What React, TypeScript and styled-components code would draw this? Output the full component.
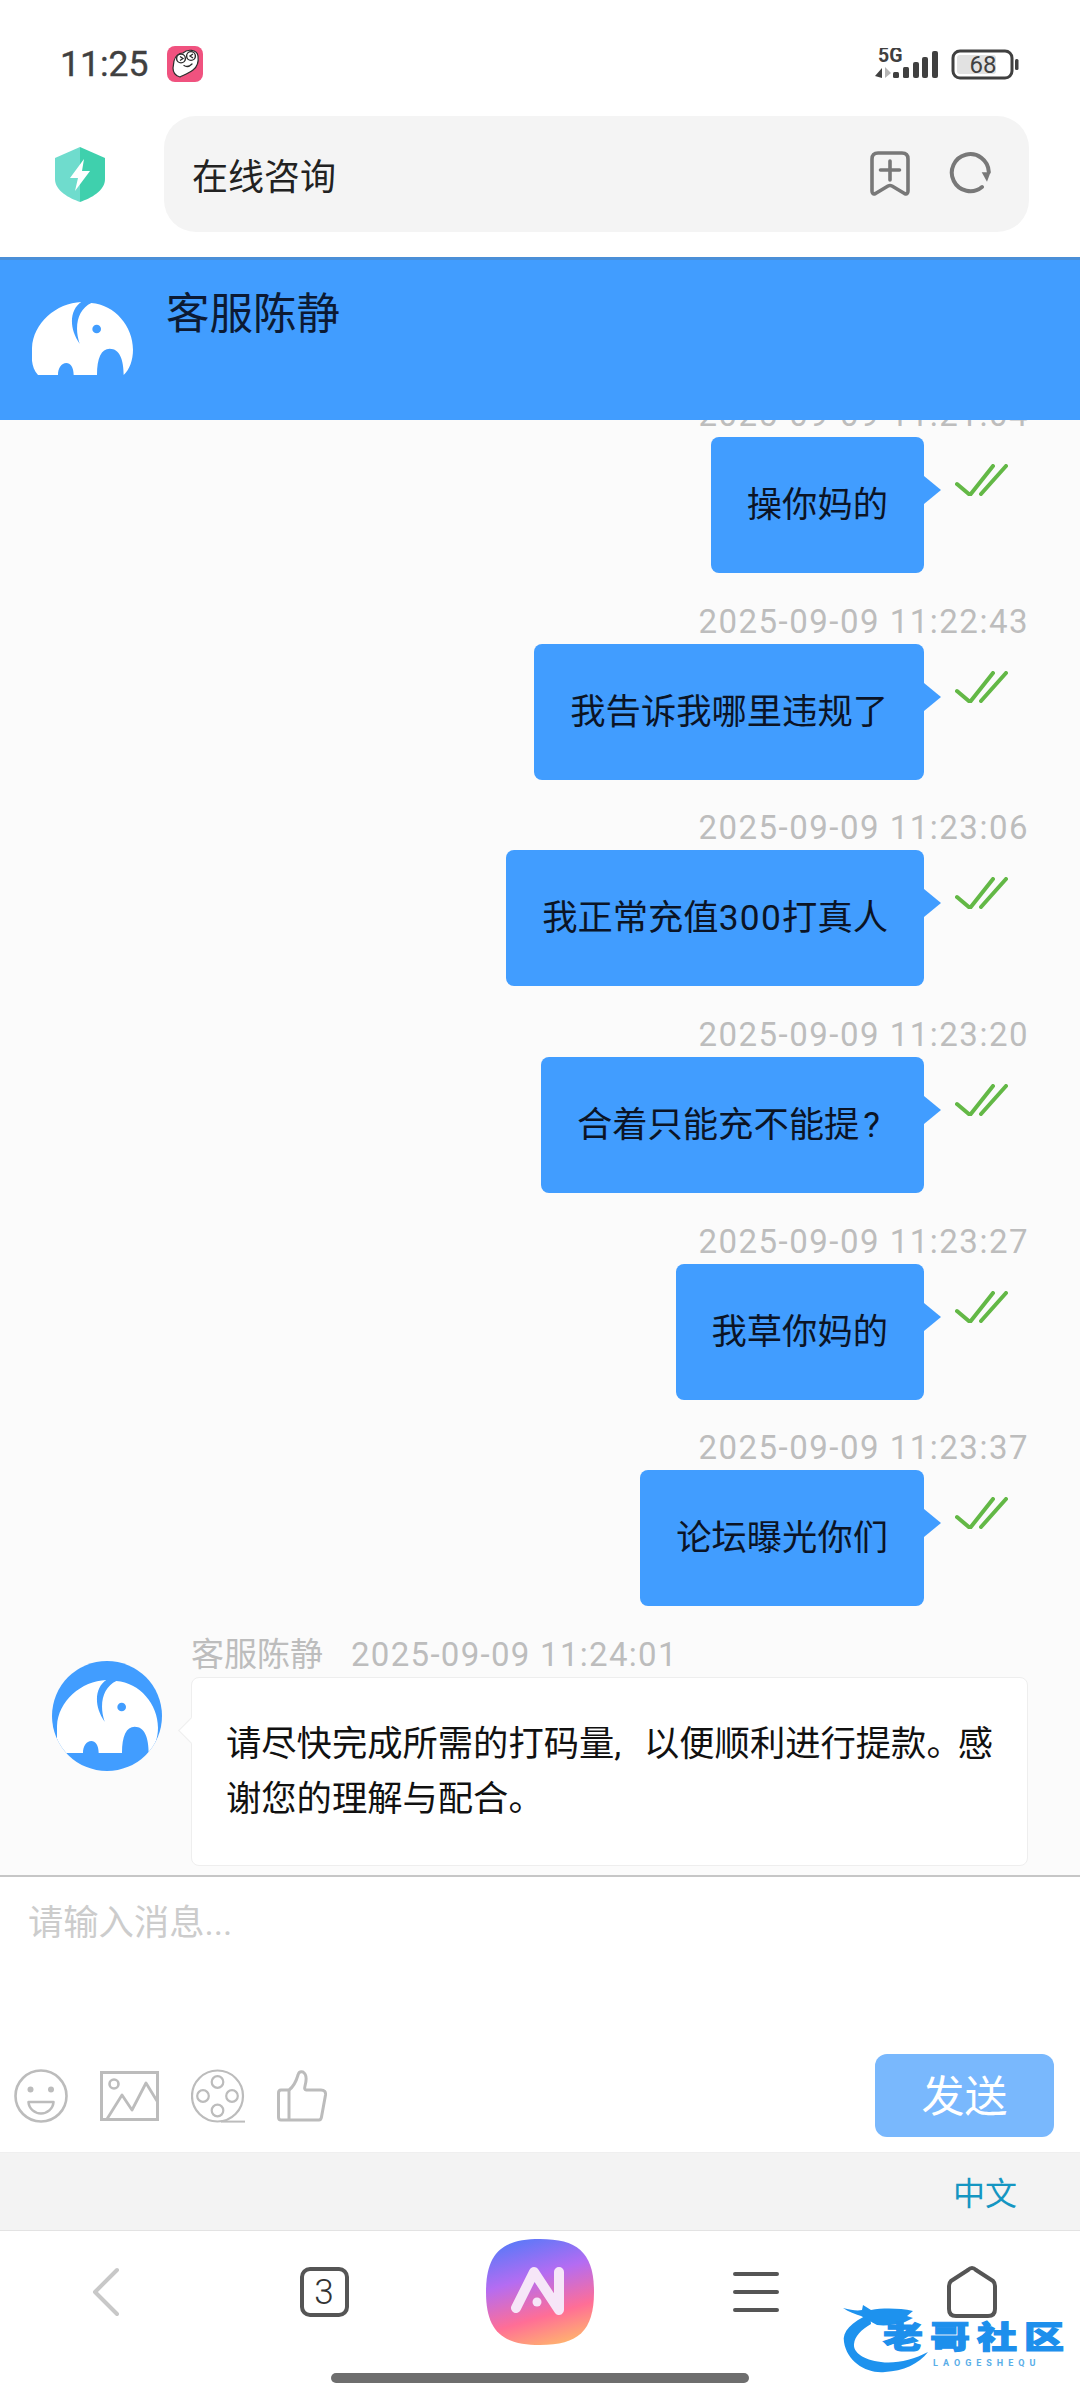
import React from 'react';
import styled, { createGlobalStyle } from 'styled-components';

const GlobalStyle = createGlobalStyle`
  html, body {
    margin: 0;
    padding: 0;
    background: #fff;
  }
  body {
    font-family: Roboto, "Noto Sans CJK SC", sans-serif;
  }
  * {
    box-sizing: border-box;
  }
`;

const Page = styled.div`
  width: 1080px;
  height: 2400px;
  position: relative;
  overflow: hidden;
  display: flex;
  flex-direction: column;
  background: #fff;
`;

/* status bar */
const StatusBar = styled.div`
  height: 110px;
  padding: 46px 61px 0 60px;
  display: flex;
  align-items: flex-start;
  flex: none;
`;

const Clock = styled.div`
  font-size: 35.5px;
  line-height: 36px;
  font-weight: 400;
  -webkit-text-stroke: 0.4px #404040;
  color: #404040;
  width: 107px;
`;

const StatusRight = styled.div`
  margin-left: auto;
  display: flex;
  align-items: flex-start;
  margin-top: 2px;
`;

/* address bar */
const TopBar = styled.div`
  height: 147px;
  padding: 6px 51px 25px 55px;
  display: flex;
  align-items: stretch;
  flex: none;
`;

const Shield = styled.svg`
  width: 50px;
  height: 55px;
  align-self: center;
  margin-top: 1px;
  flex: none;
`;

const UrlBar = styled.div`
  margin-left: 59px;
  flex: 1;
  background: #f4f4f4;
  border-radius: 32px;
  display: flex;
  align-items: center;
  padding: 0 38px 0 28px;
`;

const UrlText = styled.div`
  font-size: 36px;
  color: #222;
  flex: 1;
`;

const UrlIcon = styled.svg<{ $gap?: number }>`
  flex: none;
  margin-left: ${(p) => p.$gap || 0}px;
`;

/* chat header */
const ChatHeader = styled.div`
  height: 163px;
  flex: none;
  background: #419dff;
  border-top: 3px solid #4a8fd8;
  display: flex;
  padding: 42px 0 0 32px;
  position: relative;
  z-index: 1;
`;

const HeaderElephant = styled.svg`
  width: 101px;
  height: 73px;
  flex: none;
`;

const HeaderName = styled.div`
  margin: -17px 0 0 33px;
  font-size: 43.5px;
  line-height: 60px;
  color: #0c1a33;
`;

/* messages */
const Chat = styled.div`
  height: 1455px;
  flex: none;
  background: #fbfbfb;
  overflow: hidden;
`;

const ChatScroll = styled.div`
  margin-top: -29px;
  display: flex;
  flex-direction: column;
`;

const Sent = styled.div`
  display: flex;
  flex-direction: column;
  align-items: flex-end;
  padding-right: 52px;
  margin-bottom: 24.7px;
`;

const Stamp = styled.div`
  font-size: 33px;
  line-height: 48px;
  margin: 0 -1px -2px 0;
  letter-spacing: 1.5px;
  color: #bdbdbd;
  white-space: nowrap;
`;

const SentRow = styled.div`
  display: flex;
  align-items: flex-start;
`;

const Bubble = styled.div`
  position: relative;
  height: 136px;
  padding: 0 36px;
  background: #419dff;
  border-radius: 8px;
  font-size: 35.3px;
  line-height: 136px;
  color: #0b1426;
  white-space: nowrap;

  &::after {
    content: "";
    position: absolute;
    left: 100%;
    top: 39px;
    border-style: solid;
    border-width: 14px 0 14px 17px;
    border-color: transparent transparent transparent #419dff;
  }
`;

const Digits = styled.span`
  letter-spacing: 1.3px;
`;

const QuestionMark = styled.span`
  padding: 0 8px 0 4px;
`;

const Ticks = styled.svg`
  width: 53px;
  height: 32px;
  margin: 27px 20px 0 31px;
  flex: none;
`;

const Received = styled.div`
  display: flex;
  padding: 0 52px;
`;

const AvatarCircle = styled.div`
  width: 110px;
  height: 110px;
  margin-top: 30px;
  border-radius: 50%;
  background: #419dff;
  overflow: hidden;
  flex: none;
  padding: 19px 0 0 5px;
`;

const AvatarElephant = styled.svg`
  display: block;
  width: 101px;
  height: 73px;
`;

const ReceivedBody = styled.div`
  margin-left: 29px;
  flex: 1;
  display: flex;
  flex-direction: column;
`;

const NameLine = styled.div`
  display: flex;
  gap: 28px;
  font-size: 33px;
  line-height: 48px;
  margin-bottom: -2px;
  color: #bdbdbd;
`;

const StampInline = styled.span`
  letter-spacing: 1.3px;
`;

const Card = styled.div`
  position: relative;
  height: 189px;
  padding: 39px 20px 0 34px;
  background: #fff;
  border: 1.5px solid #eeeeee;
  border-radius: 8px;
  font-size: 35.3px;
  line-height: 55px;
  color: #111;

  &::before {
    content: "";
    position: absolute;
    left: -10px;
    top: 43px;
    width: 18px;
    height: 18px;
    background: #fff;
    border-left: 1.5px solid #eeeeee;
    border-bottom: 1.5px solid #eeeeee;
    transform: rotate(45deg);
  }
`;

const Comma = styled.span`
  letter-spacing: 7px;
`;

const Stop = styled.span`
  letter-spacing: -4px;
`;

/* composer */
const Composer = styled.div`
  height: 277px;
  flex: none;
  border-top: 2px solid #c6c6c6;
  display: flex;
  flex-direction: column;
  padding: 0 26px 15px 14px;
`;

const Placeholder = styled.div`
  margin: 21px 0 0 14px;
  font-size: 35.3px;
  line-height: 50px;
  color: #cccccc;
`;

const Tools = styled.div`
  margin-top: auto;
  display: flex;
  align-items: center;
  gap: 32px;
`;

const ToolIcon = styled.svg`
  flex: none;
`;

const SendButton = styled.div`
  margin-left: auto;
  width: 179px;
  height: 83px;
  background: #79b8fd;
  border-radius: 12px;
  color: #fff;
  font-size: 43px;
  line-height: 86px;
  text-align: center;
`;

const LangBand = styled.div`
  height: 79px;
  flex: none;
  background: #f3f3f3;
  border-bottom: 1px solid #e3e3e3;
  border-top: 1px solid #efefef;
  display: flex;
  align-items: center;
  justify-content: flex-end;
  padding: 0 63px 2px 0;
  font-size: 32px;
  color: #1596c2;
`;

/* browser nav */
const BottomNav = styled.div`
  display: grid;
  grid-template-columns: repeat(5, 216px);
  height: 114px;
  padding-top: 8px;
  flex: none;
`;

const NavCell = styled.div<{ $shift?: number }>`
  display: flex;
  align-items: center;
  justify-content: center;
  padding-right: ${(p) => p.$shift || 0}px;
`;

const TabBox = styled.div`
  width: 49px;
  height: 50px;
  border: 4px solid #555;
  border-radius: 10px;
  display: flex;
  align-items: center;
  justify-content: center;
  font-size: 35px;
  color: #333;
  font-weight: 300;
`;

const HomeBar = styled.div`
  width: 418px;
  height: 10px;
  margin: 28px auto 0;
  border-radius: 5px;
  background: #6e6e6e;
`;

const Watermark = styled.div`
  position: absolute;
  left: 843px;
  top: 2302px;
  width: 225px;
  height: 72px;
`;

const DragonSvg = styled.svg`
  position: absolute;
  left: 0;
  top: 0;
  overflow: visible;
`;

const WatermarkName = styled.div`
  position: absolute;
  left: 40px;
  top: 19px;
  font-size: 40px;
  line-height: 44px;
  font-weight: 900;
  letter-spacing: 7px;
  color: #1d8fec;
  -webkit-text-stroke: 1.5px #1d8fec;
  transform: scaleY(0.78);
  transform-origin: top left;
  white-space: nowrap;
`;

const WatermarkSub = styled.div`
  position: absolute;
  left: 90px;
  top: 56px;
  font-size: 9px;
  line-height: 11px;
  font-weight: 700;
  letter-spacing: 5px;
  color: #5aaee8;
  white-space: nowrap;
`;

const ELEPHANT =
  'M115 316 C90 290 97 245 97 235 C100 160 170 100 245 97 C212 118 205 172 240 222 C222 170 235 118 275 100 C345 105 400 170 400 240 C400 270 390 300 372 316 C372 270 360 237 330 237 C305 237 292 265 292 316 L222 316 C222 292 212 280 200 280 C185 280 175 295 175 316 Z';

const messages: { time: string; text: React.ReactNode }[] = [
  { time: '2025-09-09 11:21:04', text: '操你妈的' },
  { time: '2025-09-09 11:22:43', text: '我告诉我哪里违规了' },
  { time: '2025-09-09 11:23:06', text: <>我正常充值<Digits>300</Digits>打真人</> },
  { time: '2025-09-09 11:23:20', text: <>合着只能充不能提<QuestionMark>?</QuestionMark></> },
  { time: '2025-09-09 11:23:27', text: '我草你妈的' },
  { time: '2025-09-09 11:23:37', text: '论坛曝光你们' },
];

const StatusApp = () => (
  <svg width="36" height="36" viewBox="0 0 36 36" style={{ flex: 'none' }}>
    <rect width="36" height="36" rx="8" fill="#f0527f" />
    <path d="M7 15 C8 10 12 7 16 7 C20 3 30 3 31 10 C32 17 30 21 26 24 C22 27 17 29 13 31 C9 30 6 27 6 22 Z" fill="#fff" stroke="#2b2b2b" strokeWidth="1.2" strokeLinejoin="round" />
    <circle cx="14" cy="12.5" r="4.4" fill="#fff" stroke="#2b2b2b" strokeWidth="1.4" />
    <circle cx="24" cy="10" r="4.4" fill="#fff" stroke="#2b2b2b" strokeWidth="1.4" />
    <path d="M13 10.5 L16 12.5 L13 14.5 M26 8 L23 10 L26 12" fill="none" stroke="#2b2b2b" strokeWidth="1.3" />
    <path d="M17 19.5 Q21 22 25 18" fill="none" stroke="#2b2b2b" strokeWidth="1.3" strokeLinecap="round" />
  </svg>
);

const StatusIcons = () => (
  <svg width="144" height="32" viewBox="-2 0 144 32">
    <text x="1" y="14" fontFamily="Roboto, sans-serif" fontWeight="700" fontSize="19.5" fill="#404040">5G</text>
    <path d="M5 20 L5 30 L-2 28 Z" fill="#404040" />
    <path d="M8 19 L8 30 L14 25 Z" fill="#b5b5b5" />
    <g fill="#404040">
      <rect x="16" y="24" width="6" height="6" rx="1.5" />
      <rect x="26" y="19" width="6" height="11" rx="1.5" />
      <rect x="36" y="14" width="6" height="16" rx="2" />
      <rect x="45" y="9" width="6" height="21" rx="2" />
      <rect x="55" y="3" width="6" height="27" rx="2" />
    </g>
    <rect x="76" y="3" width="59" height="27" rx="7" fill="none" stroke="#404040" strokeWidth="3" />
    <rect x="80" y="7" width="39" height="19" rx="3" fill="#e2e2e2" />
    <rect x="138" y="11" width="3.5" height="11" rx="1.5" fill="#404040" />
    <text x="106" y="25" textAnchor="middle" fontFamily="Roboto, sans-serif" fontSize="24" fill="#404040">68</text>
  </svg>
);

const Elephant = ({ eye }: { eye: string }) => (
  <>
    <path d={ELEPHANT} fill="#fff" />
    <circle cx="291" cy="178" r="13" fill={eye} />
  </>
);

const TickMark = () => (
  <Ticks viewBox="0 0 53 32">
    <path d="M2 20 L15 31 L38 2 M26 30 L51 2" fill="none" stroke="#63b846" strokeWidth="4" strokeLinecap="round" strokeLinejoin="round" />
  </Ticks>
);

export default function App() {
  return (
    <Page>
      <GlobalStyle />
      <StatusBar>
        <Clock>11:25</Clock>
        <StatusApp />
        <StatusRight>
          <StatusIcons />
        </StatusRight>
      </StatusBar>

      <TopBar>
        <Shield viewBox="0 0 50 55">
          <path d="M25 0 L50 11 V32 C50 44 36 51 25 55 Z" fill="#3fd0ad" />
          <path d="M25 0 L0 11 V32 C0 44 14 51 25 55 Z" fill="#6fdccd" />
          <path d="M29 12 L15 31 H23 L20 44 L35 24 H27 Z" fill="#fff" />
        </Shield>
        <UrlBar>
          <UrlText>在线咨询</UrlText>
          <UrlIcon width="40" height="46" viewBox="0 0 40 46">
            <path d="M2 8 Q2 2 8 2 H32 Q38 2 38 8 V40 Q38 44 34.5 42.5 L22 35 Q20 34 18 35 L5.5 42.5 Q2 44 2 40 Z" fill="none" stroke="#787878" strokeWidth="3.6" strokeLinejoin="round" />
            <path d="M20 10 V29 M10.5 19 H29.5" fill="none" stroke="#787878" strokeWidth="3.6" strokeLinecap="round" />
          </UrlIcon>
          <UrlIcon $gap={39} width="42" height="44" viewBox="0 0 42 44">
            <path d="M33 35 A18.5 18.5 0 1 1 39.8 20" fill="none" stroke="#787878" strokeWidth="4" strokeLinecap="round" />
            <path d="M32.7 20.3 H41.5 L38 29.7 Z" fill="#787878" strokeLinejoin="round" />
          </UrlIcon>
        </UrlBar>
      </TopBar>

      <ChatHeader>
        <HeaderElephant viewBox="97 97 303 219">
          <Elephant eye="#419dff" />
        </HeaderElephant>
        <HeaderName>客服陈静</HeaderName>
      </ChatHeader>

      <Chat>
        <ChatScroll>
          {messages.map((m) => (
            <Sent key={m.time}>
              <Stamp>{m.time}</Stamp>
              <SentRow>
                <Bubble>{m.text}</Bubble>
                <TickMark />
              </SentRow>
            </Sent>
          ))}
          <Received>
            <AvatarCircle>
              <AvatarElephant viewBox="97 97 303 219">
                <Elephant eye="#419dff" />
              </AvatarElephant>
            </AvatarCircle>
            <ReceivedBody>
              <NameLine>
                <span>客服陈静</span>
                <StampInline>2025-09-09 11:24:01</StampInline>
              </NameLine>
              <Card>
                请尽快完成所需的打码量<Comma>, </Comma>以便顺利进行提款<Stop>。</Stop>感谢您的理解与配合。
              </Card>
            </ReceivedBody>
          </Received>
        </ChatScroll>
      </Chat>

      <Composer>
        <Placeholder>请输入消息...</Placeholder>
        <Tools>
          <ToolIcon width="54" height="54" viewBox="0 0 54 54">
            <circle cx="27" cy="27" r="25.5" fill="none" stroke="#bcbcbc" strokeWidth="2.6" />
            <circle cx="16.5" cy="20.5" r="3" fill="#bcbcbc" />
            <circle cx="37" cy="20.5" r="3" fill="#bcbcbc" />
            <path d="M14.5 33 H39.5 C39 40 33 44.5 27 44.5 C21 44.5 15 40 14.5 33 Z" fill="none" stroke="#bcbcbc" strokeWidth="2.6" strokeLinejoin="round" />
          </ToolIcon>
          <ToolIcon width="59" height="50" viewBox="0 0 59 50">
            <rect x="1.5" y="1.5" width="56" height="47" fill="none" stroke="#bcbcbc" strokeWidth="3" />
            <circle cx="14" cy="13" r="4.5" fill="none" stroke="#bcbcbc" strokeWidth="2.6" />
            <path d="M7 48 L22 24 L32 39 L46 12 L57 30" fill="none" stroke="#bcbcbc" strokeWidth="2.8" strokeLinejoin="round" />
          </ToolIcon>
          <ToolIcon width="54" height="54" viewBox="0 0 54 54">
            <circle cx="26.5" cy="27" r="25.5" fill="none" stroke="#bcbcbc" strokeWidth="2.2" />
            <circle cx="26.5" cy="13" r="5.8" fill="none" stroke="#bcbcbc" strokeWidth="2.2" />
            <circle cx="26.5" cy="41.5" r="5.8" fill="none" stroke="#bcbcbc" strokeWidth="2.2" />
            <circle cx="12" cy="27" r="5.8" fill="none" stroke="#bcbcbc" strokeWidth="2.2" />
            <circle cx="41" cy="27" r="5.8" fill="none" stroke="#bcbcbc" strokeWidth="2.2" />
            <path d="M30 52.6 H54" fill="none" stroke="#bcbcbc" strokeWidth="2" />
          </ToolIcon>
          <ToolIcon width="50" height="52" viewBox="0 0 50 52">
            <path d="M12 20 H4 Q1.5 20 1.5 23 V47 Q1.5 50 4 50 H42 Q44 50 44.5 47 L48.5 25 Q49 20 44 20 H29 Q27 20 28 16 Q31 5 26 2 Q22 1 21 5 C19 12 16 17 12 20 Z" fill="none" stroke="#bcbcbc" strokeWidth="3" strokeLinejoin="round" />
            <path d="M12 20 V50" fill="none" stroke="#bcbcbc" strokeWidth="3" />
          </ToolIcon>
          <SendButton>发送</SendButton>
        </Tools>
      </Composer>

      <LangBand>中文</LangBand>

      <BottomNav>
        <NavCell $shift={4}>
          <svg width="28" height="50" viewBox="0 0 28 50">
            <path d="M25 3 L3 25 L25 47" fill="none" stroke="#c8c8c8" strokeWidth="4" strokeLinecap="round" strokeLinejoin="round" />
          </svg>
        </NavCell>
        <NavCell>
          <TabBox>3</TabBox>
        </NavCell>
        <NavCell>
          <svg width="108" height="106" viewBox="0 0 108 106">
            <defs>
              <linearGradient id="appBg" x1="0.35" y1="0" x2="0.65" y2="1">
                <stop offset="0" stopColor="#5f78f8" />
                <stop offset="0.35" stopColor="#b46cf2" />
                <stop offset="0.72" stopColor="#ff6e96" />
                <stop offset="1" stopColor="#ffb070" />
              </linearGradient>
            </defs>
            <path d="M54 0 C92 0 108 14 108 53 C108 92 92 106 54 106 C16 106 0 92 0 53 C0 14 16 0 54 0 Z" fill="url(#appBg)" />
            <path d="M30 69 L48 33 L73 71 V33" fill="none" stroke="#f6e6f8" strokeWidth="10" strokeLinecap="round" strokeLinejoin="round" />
            <circle cx="51" cy="63" r="4.5" fill="#f6e6f8" />
          </svg>
        </NavCell>
        <NavCell>
          <svg width="46" height="42" viewBox="0 0 46 42">
            <path d="M2 3 H44 M2 21 H44 M2 39 H44" fill="none" stroke="#555" strokeWidth="4" strokeLinecap="round" />
          </svg>
        </NavCell>
        <NavCell>
          <svg width="50" height="52" viewBox="0 0 50 52">
            <path d="M25 2 Q23 2 21 4 L4 15 Q2 17 2 20 V43 Q2 50 9 50 H41 Q48 50 48 43 V20 Q48 17 46 15 L29 4 Q27 2 25 2 Z" fill="none" stroke="#555" strokeWidth="4" strokeLinejoin="round" />
          </svg>
        </NavCell>
      </BottomNav>
      <HomeBar />

      <Watermark>
        <DragonSvg width="225" height="72" viewBox="0 0 225 72">
          <path d="M27 12 C8 20 -1 30 1 40 C4 60 24 72 42 70 C60 69 76 62 85 50 C70 58 52 62 38 60 C20 58 10 50 11 42 C12 34 18 28 28 22 Z" fill="#1d92ee" />
          <path d="M0 6 C8 8 14 9 19 8 L20 3 L28 8 C40 6 56 6 70 9 L64 14 L70 16 L62 20 C52 23 42 24 34 23 C28 20 24 17 18 14 C12 12 6 10 0 6 Z" fill="#1d92ee" />
        </DragonSvg>
        <WatermarkName>老哥社区</WatermarkName>
        <WatermarkSub>LAOGESHEQU</WatermarkSub>
      </Watermark>
    </Page>
  );
}
